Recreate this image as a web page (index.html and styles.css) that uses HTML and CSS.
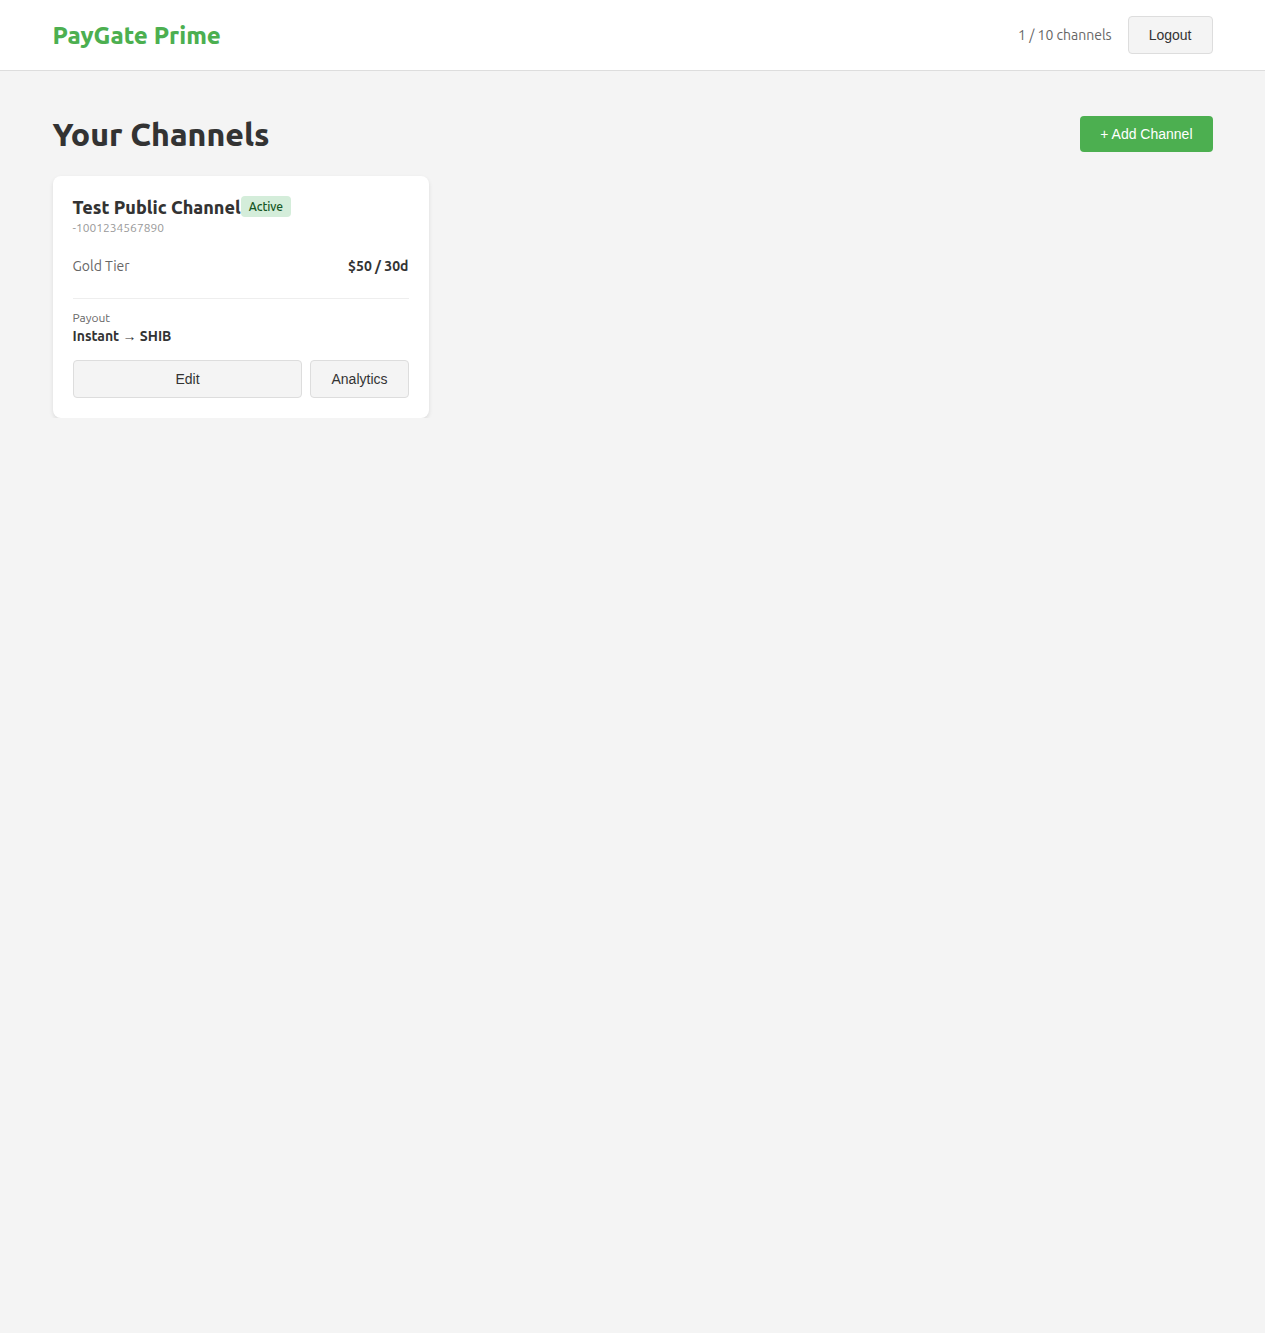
FILE: index.html
```html
<!DOCTYPE html>
<html lang="en">
<head>
<meta charset="utf-8">
<title>PayGate Prime</title>
<link rel="stylesheet" href="styles.css">
</head>
<body>
<header class="header">
  <div class="container header-inner">
    <div class="logo">PayGate Prime</div>
    <div class="header-right">
      <span class="count">1 / 10 channels</span>
      <button class="btn btn-secondary">Logout</button>
    </div>
  </div>
</header>
<main class="container main">
  <div class="page-head">
    <h1 class="title">Your Channels</h1>
    <button class="btn btn-primary">+ Add Channel</button>
  </div>
  <div class="grid">
    <div class="card">
      <div class="card-title-row">
        <h3 class="card-title">Test Public Channel</h3>
        <span class="badge">Active</span>
      </div>
      <div class="card-id">-1001234567890</div>
      <div class="tiers">
        <div class="tier">
          <span class="tier-name">Gold Tier</span>
          <span class="tier-price">$50 / 30d</span>
        </div>
      </div>
      <div class="payout">
        <div class="payout-label">Payout</div>
        <div class="payout-value">Instant → SHIB</div>
      </div>
      <div class="actions">
        <button class="btn btn-secondary btn-grow">Edit</button>
        <button class="btn btn-secondary">Analytics</button>
      </div>
    </div>
  </div>
</main>
</body>
</html>
```
FILE: styles.css
```css
* { box-sizing: border-box; }
body {
  margin: 0;
  background: #f4f4f4;
  font-family: Ubuntu, "Open Sans", "Noto Sans", sans-serif;
  color: #333;
}
.container {
  max-width: 1200px;
  margin: 0 auto;
  padding: 0 20px;
}
.header {
  background: #fff;
  border-bottom: 1px solid #ddd;
}
.header-inner {
  height: 70px;
  display: flex;
  align-items: center;
  justify-content: space-between;
}
.logo {
  font-size: 24px;
  font-weight: 800;
  color: #4caf50;
}
.header-right {
  display: flex;
  align-items: center;
  gap: 16px;
}
.count {
  font-size: 14px;
  color: #666;
}
.btn {
  font-family: "Liberation Sans", Arial, sans-serif;
  font-size: 14px;
  border-radius: 4px;
  cursor: pointer;
  padding: 10px 20px;
  line-height: 16px;
}
.btn-secondary {
  background: #f4f4f4;
  color: #333;
  border: 1px solid #ddd;
}
.btn-primary {
  background: #4caf50;
  color: #fff;
  border: none;
}
.main {
  padding-top: 45px;
}
.page-head {
  display: flex;
  align-items: center;
  justify-content: space-between;
  margin-bottom: 24px;
}
.title {
  margin: 0;
  font-size: 32px;
  font-weight: 800;
  color: #333;
}
.grid {
  display: grid;
  grid-template-columns: repeat(auto-fill, minmax(350px, 1fr));
  gap: 16px;
}
.card {
  background: #fff;
  border-radius: 8px;
  padding: 20px;
  box-shadow: 0 2px 4px rgba(0,0,0,0.1);
}
.card-title-row {
  display: flex;
  align-items: center;
}
.card-title {
  margin: 0;
  font-size: 18px;
  font-weight: 800;
  color: #333;
}
.badge {
  font-size: 12px;
  background: #d4edda;
  color: #155724;
  padding: 4px 8px;
  border-radius: 4px;
  font-weight: 500;
}
.card-id {
  font-size: 12px;
  color: #999;
  margin-top: 4px;
}
.tiers {
  padding: 16px 0;
  border-bottom: 1px solid #eee;
  margin-bottom: 12px;
}
.tier {
  display: flex;
  justify-content: space-between;
  padding: 8px 0;
  font-size: 14px;
}
.tier-name { color: #666; }
.tier-price { font-weight: 600; }
.payout-label {
  font-size: 12px;
  color: #666;
}
.payout-value {
  font-size: 14px;
  font-weight: 600;
  margin-top: 4px;
}
.actions {
  display: flex;
  gap: 8px;
  margin-top: 16px;
}
.btn-grow { flex: 1; }
```
